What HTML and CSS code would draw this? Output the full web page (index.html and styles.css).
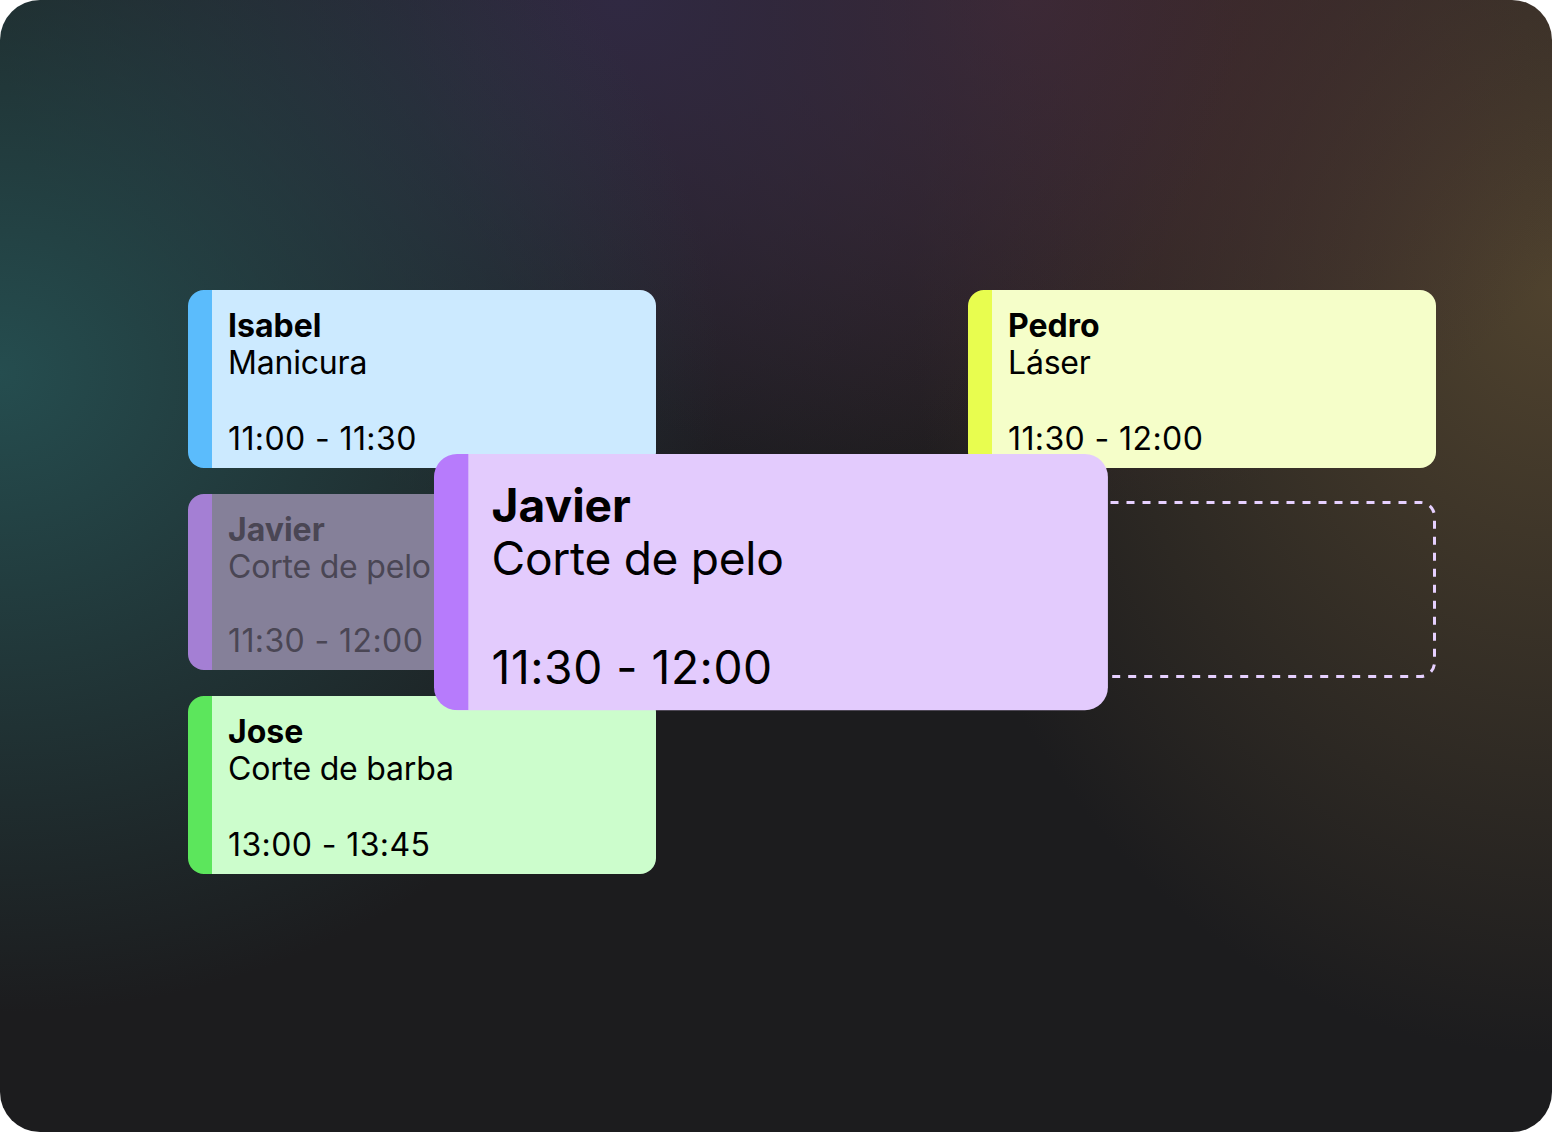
FILE: index.html
```html
<!DOCTYPE html>
<html lang="es">
<head>
<meta charset="utf-8">
<title>Agenda</title>
<link rel="stylesheet" href="styles.css">
</head>
<body>
<div class="frame">
  <div class="board">
    <div class="card card-blue">
      <div class="head"><div class="name">Isabel</div><div class="service">Manicura</div></div>
      <div class="time">11:00 - 11:30</div>
    </div>
    <div class="card card-yellow">
      <div class="head"><div class="name">Pedro</div><div class="service">Láser</div></div>
      <div class="time">11:30 - 12:00</div>
    </div>
    <div class="card card-ghost">
      <div class="head"><div class="name">Javier</div><div class="service">Corte de pelo</div></div>
      <div class="time">11:30 - 12:00</div>
    </div>
    <div class="card card-green">
      <div class="head"><div class="name">Jose</div><div class="service">Corte de barba</div></div>
      <div class="time">13:00 - 13:45</div>
    </div>
  </div>
  <svg class="drop" width="472" height="180" viewBox="0 0 472 180">
    <rect x="2.5" y="2.5" width="466" height="174" rx="14" ry="14" fill="none" stroke="#e6d0ff" stroke-width="3" stroke-dasharray="8 8"/>
  </svg>
  <div class="card card-purple dragging">
    <div class="head"><div class="name">Javier</div><div class="service">Corte de pelo</div></div>
    <div class="time">11:30 - 12:00</div>
  </div>
</div>
</body>
</html>
```
FILE: styles.css
```css
html, body {
  margin: 0;
  padding: 0;
  background: #ffffff;
}
.frame {
  position: relative;
  width: 1552px;
  height: 1132px;
  box-sizing: border-box;
  border-radius: 40px;
  overflow: hidden;
  padding: 290px 0 0 188px;
  font-family: Inter, "Noto Sans", sans-serif;
  background:
    radial-gradient(ellipse 720px 640px at 0% 33%, rgba(37, 77, 79, 1) 0%, rgba(37, 77, 79, 0) 100%),
    radial-gradient(ellipse 620px 520px at 40% 0%, rgba(48, 41, 66, 1) 0%, rgba(48, 41, 66, 0) 100%),
    radial-gradient(ellipse 620px 520px at 66% 0%, rgba(66, 41, 48, 1) 0%, rgba(66, 41, 48, 0) 100%),
    radial-gradient(ellipse 640px 760px at 100% 26%, rgba(79, 66, 46, 1) 0%, rgba(79, 66, 46, 0) 100%),
    #1c1c1e;
}
.board {
  display: grid;
  grid-template-columns: 468px 468px;
  grid-template-rows: 178px 176px 178px;
  column-gap: 312px;
  row-gap: 26px;
}
.card {
  box-sizing: border-box;
  display: flex;
  flex-direction: column;
  justify-content: space-between;
  border-radius: 16px;
  border-left: 24px solid;
  padding: 17px 16px 11px 16px;
  font-size: 32px;
  line-height: 37px;
  color: #000000;
  white-space: nowrap;
  overflow: hidden;
}
.name {
  font-weight: 700;
}
.service {
  font-weight: 400;
  letter-spacing: -0.2px;
}
.time {
  font-weight: 400;
  letter-spacing: 0.4px;
}
.card-blue {
  grid-column: 1;
  grid-row: 1;
  background: #cceaff;
  border-left-color: #5bbcfc;
}
.card-yellow {
  grid-column: 2;
  grid-row: 1;
  background: #f5fec9;
  border-left-color: #e8fd4f;
}
.card-ghost {
  grid-column: 1;
  grid-row: 2;
  background: #858099;
  border-left-color: #a47fd4;
  color: #4a4654;
}
.card-green {
  grid-column: 1;
  grid-row: 3;
  background: #ccfdcc;
  border-left-color: #5ce65c;
}
.card-purple {
  background: #e3cbfd;
  border-left-color: #b77bfc;
}
.dragging {
  position: absolute;
  left: 434px;
  top: 454px;
  width: 468px;
  height: 178px;
  transform-origin: 0 0;
  transform: scale(1.44);
}
.drop {
  position: absolute;
  left: 966px;
  top: 500px;
}
```
